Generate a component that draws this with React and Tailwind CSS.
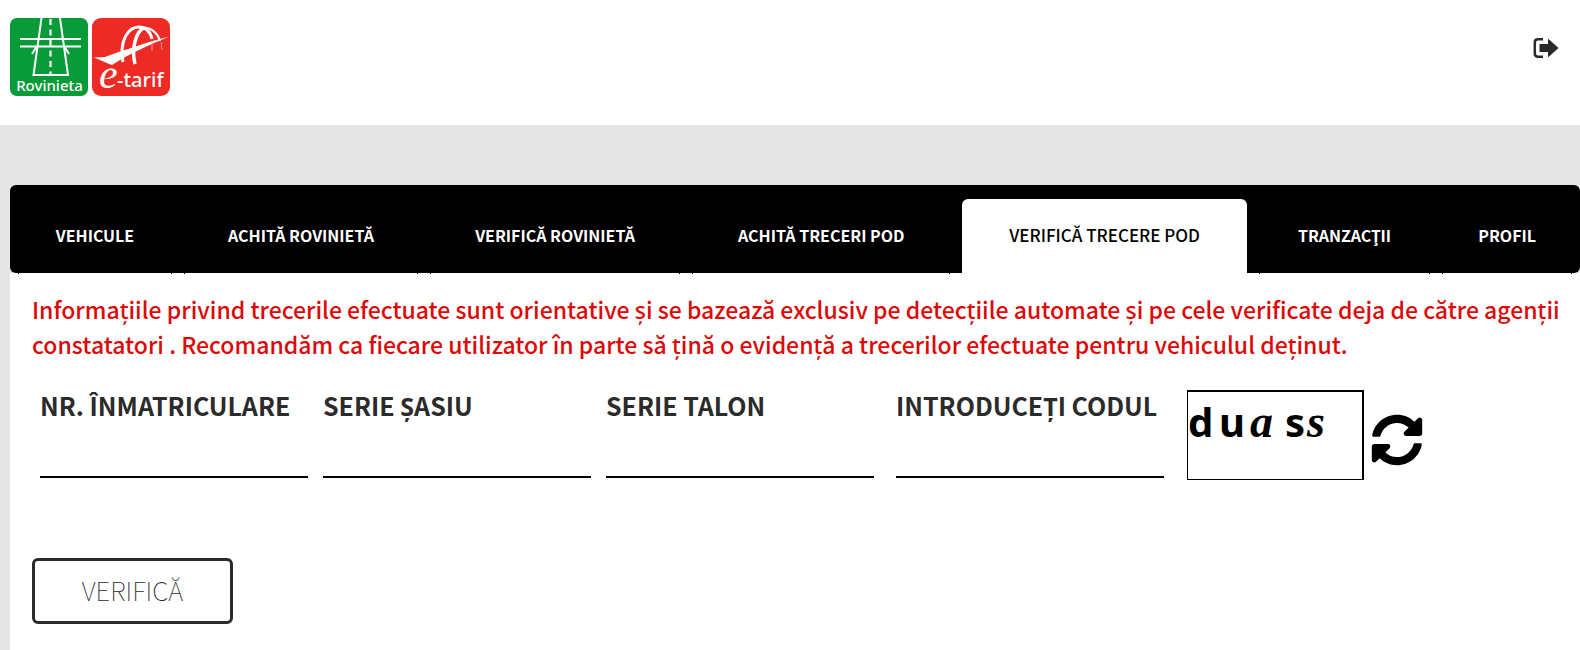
import React, {useState} from "react";
import {FaSyncAlt} from "react-icons/fa";

const TABS = [
    'Vehicule',
    'Achită rovinietă',
    'Verifică rovinietă',
    'Achită treceri pod',
    'Verifică trecere pod',
    'Tranzacţii',
    'Profil',
];

const RovinietaLogo = () => (
    <svg viewBox="0 0 78 78" className="w-[78px] h-[78px]" role="img" aria-label="Rovinieta">
        <rect width="78" height="78" rx="7" fill="#069a38"/>
        <g stroke="#fff" fill="none">
            <path strokeWidth="2" d="M31.5 0L23.5 57H58L50 0M10 21h61M10 28.500h61"/>
            <path strokeWidth="2.200" strokeDasharray="6 4.500" d="M40.500 1v55"/>
            <path strokeWidth="2" d="M22 36l4-6.500M59 36l-4-6.500"/>
        </g>
        <text x="39.500" y="73" textAnchor="middle" fill="#fff" fontSize="15" fontWeight="500"
              fontFamily="Noto Sans, sans-serif">Rovinieta</text>
    </svg>
)

const TarifLogo = () => (
    <svg viewBox="0 0 78 78" className="w-[78px] h-[78px]" role="img" aria-label="e-tarif">
        <rect width="78" height="78" rx="9" fill="#ee2a24"/>
        <path fill="#fff" d="M2 39.500l11-.5C32 32 56 24 77 18.500C58 27 38 35 20 47l-4-1.500z"/>
        <g fill="none" stroke="#fff">
            <path strokeWidth="3" d="M31 44C27 23 36 9 47 9c6 0 11 4 13 12"/>
            <path strokeWidth="3.500" d="M43 46C39 30 44 14 52 9.500"/>
            <path strokeWidth="2" d="M50 10c9-2 16 6 18 13"/>
            <path strokeWidth="1" opacity=".5" d="M60 24v9M69 24l1 8"/>
        </g>
        <text x="7" y="70" fill="#fff" fontSize="42" fontStyle="italic" fontFamily="Liberation Serif, serif">e</text>
        <text x="25" y="69" fill="#fff" fontSize="20" fontWeight="500" fontFamily="Noto Sans, sans-serif">-tarif</text>
    </svg>
)

const LogoutIcon = () => (
    <svg viewBox="0 0 26 20" className="w-[26px] h-5" fill="none">
        <path stroke="#2b2b2b" strokeWidth="2.500" d="M10 1.300H5Q1.800 1.300 1.800 4.500v11Q1.800 18.700 5 18.700h5"/>
        <path fill="#2b2b2b" d="M6.500 6H15V1.500q0-.8.8-.2L25 9.500q.5.500 0 1L15.800 18.700q-.8.600-.8-.2V14H6.500z"/>
    </svg>
)

const Field = ({id, label}) => (
    <div className="w-[268px]">
        <label htmlFor={id} className="block text-[25px] leading-[30px] font-bold uppercase whitespace-nowrap">{label}</label>
        <input id={id} type="text"
               className="block w-full h-[54px] mt-1 border-b-2 border-black bg-transparent text-2xl outline-none"/>
    </div>
)

const App = () => {
    const [active, setActive] = useState('Verifică trecere pod');

    return (
        <div className="min-h-screen flex flex-col bg-[#e5e5e5] text-[#2b2b2b] font-['Noto_Sans_CJK_SC','Noto_Sans',sans-serif]">
            <header className="flex justify-between items-start bg-white pl-[10px] pr-[21px] pt-[18px] pb-[29px]">
                <a href="#" className="flex gap-1">
                    <RovinietaLogo/>
                    <TarifLogo/>
                </a>
                <button type="button" aria-label="Ieșire" className="mt-5">
                    <LogoutIcon/>
                </button>
            </header>

            <main className="grow flex flex-col pl-[10px] mt-[60px]">
                <nav className="relative bg-black rounded-md px-[2px] pt-[14px]">
                    <ul className="table w-full">
                        {TABS.map((tab) => (
                            <li key={tab} className="table-cell px-[6px]">
                                <a href="#" onClick={() => setActive(tab)}
                                   className={active === tab
                                       ? "block h-[75px] -mb-px px-6 leading-[72px] rounded-t-md bg-white text-black text-[17px] font-medium text-center uppercase whitespace-nowrap"
                                       : "block h-[75px] -mb-px px-6 leading-[72px] border-x border-black text-white text-base font-bold text-center uppercase whitespace-nowrap"}>
                                    {tab}
                                </a>
                            </li>
                        ))}
                    </ul>
                </nav>

                <form className="grow bg-white pl-[22px] pr-2 pt-[19px] pb-6" onSubmit={(e) => e.preventDefault()}>
                    <p className="text-[23px] leading-[35px] font-medium text-[#dd0808]">
                        Informațiile privind trecerile efectuate sunt orientative și se bazează exclusiv pe detecțiile
                        automate și pe cele verificate deja de către agenții constatatori . Recomandăm ca fiecare
                        utilizator în parte să țină o evidență a trecerilor efectuate pentru vehiculul deținut.
                    </p>

                    <div className="flex items-start mt-7 pl-2">
                        <div className="flex gap-[15px]">
                            <Field id="plate" label="Nr. înmatriculare"/>
                            <Field id="chassis" label="Serie șasiu"/>
                            <Field id="card" label="Serie talon"/>
                        </div>
                        <div className="flex ml-[22px]">
                            <Field id="code" label="Introduceți codul"/>
                        </div>
                        <div className="flex items-baseline w-[177px] h-[90px] ml-[23px] border border-t-2 border-r-2 border-black text-black text-[40px] leading-[60px] font-bold font-['Noto_Sans',sans-serif]">
                            <span className="w-[31px]">d</span>
                            <span className="w-[31px]">u</span>
                            <span className="w-[35px] font-['Liberation_Serif',serif] italic text-[46px]">a</span>
                            <span className="w-[22px]">s</span>
                            <span className="font-['Liberation_Serif',serif] italic text-[46px]">s</span>
                        </div>
                        <button type="button" aria-label="Alt cod" className="mt-6 ml-[7px] text-black">
                            <FaSyncAlt size={52}/>
                        </button>
                    </div>

                    <button type="submit"
                            className="block w-[201px] h-[66px] mt-[78px] pb-1 rounded-md border-[3px] border-[#2b2b2b] text-[26px] font-thin uppercase">
                        Verifică
                    </button>
                </form>
            </main>
        </div>
    )
}

export default App;
